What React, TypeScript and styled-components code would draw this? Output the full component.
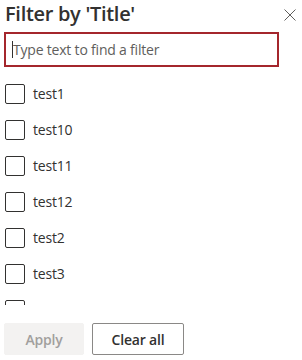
import React from "react";
import styled, { createGlobalStyle } from "styled-components";

const Global = createGlobalStyle`
  html, body { margin: 0; padding: 0; background: #ffffff; overflow: hidden; }
  body { font-family: "Segoe UI", "Open Sans", "Liberation Sans", sans-serif; }
  * { box-sizing: border-box; }
`;

const Panel = styled.div`
  width: 302px;
  height: 360px;
  display: flex;
  flex-direction: column;
  padding: 0 6px 0 4px;
  background: #fff;
`;

const Header = styled.div`
  display: flex;
  align-items: flex-start;
  justify-content: space-between;
  height: 28px;
`;

const Title = styled.h1`
  margin: 0 0 0 1px;
  font-size: 20px;
  line-height: 28px;
  font-weight: 600;
  color: #323130;
  letter-spacing: -0.3px;
`;

const CloseButton = styled.button`
  border: none;
  background: transparent;
  padding: 0;
  margin-top: 9px;
  width: 12px;
  height: 12px;
  display: flex;
  cursor: pointer;
`;

const SearchBox = styled.div`
  margin-top: 4px;
  width: 275px;
  height: 35px;
  border: 2px solid #a4262c;
  display: flex;
  align-items: center;
  padding-left: 6px;
`;

const SearchInput = styled.input`
  border: none;
  outline: none;
  width: 100%;
  font-family: inherit;
  font-size: 14px;
  color: #323130;
  padding: 0;
  letter-spacing: -0.2px;
  &::placeholder { color: #605e5c; }
`;

const Caret = styled.span`
  width: 1px;
  height: 17px;
  background: #323130;
  margin-right: 0px;
  flex: none;
`;

const List = styled.div`
  margin-top: 9px;
  height: 229px;
  overflow: hidden;
  display: flex;
  flex-direction: column;
`;

const Row = styled.label`
  height: 36px;
  flex: none;
  display: flex;
  align-items: center;
  gap: 8px;
  padding-left: 1px;
`;

const Box = styled.span`
  width: 20px;
  height: 20px;
  border: 1px solid #323130;
  border-radius: 2px;
  flex: none;
`;

const Label = styled.span`
  font-size: 14px;
  color: #323130;
  line-height: 20px;
  letter-spacing: -0.2px;
`;

const Footer = styled.div`
  margin-top: 18px;
  display: flex;
  gap: 8px;
`;

const Button = styled.button<{ $primary?: boolean; $w: number }>`
  width: ${(p) => p.$w}px;
  height: 32px;
  border-radius: 2px;
  font-family: inherit;
  font-size: 14px;
  font-weight: 600;
  letter-spacing: -0.2px;
  padding: 0;
  border: ${(p) => (p.$primary ? "1px solid #f3f2f1" : "1px solid #8a8886")};
  background: ${(p) => (p.$primary ? "#f3f2f1" : "#ffffff")};
  color: ${(p) => (p.$primary ? "#a19f9d" : "#323130")};
`;

const items = ["test1", "test10", "test11", "test12", "test2", "test3", "test4"];

export default function App() {
  return (
    <>
      <Global />
      <Panel>
        <Header>
          <Title>Filter by 'Title'</Title>
          <CloseButton aria-label="Close">
            <svg width="12" height="12" viewBox="0 0 12 12">
              <path d="M0.5 0.5 L11.5 11.5 M11.5 0.5 L0.5 11.5" stroke="#605e5c" strokeWidth="1" fill="none" />
            </svg>
          </CloseButton>
        </Header>
        <SearchBox>
          <Caret />
          <SearchInput placeholder="Type text to find a filter" />
        </SearchBox>
        <List>
          {items.map((t) => (
            <Row key={t}>
              <Box />
              <Label>{t}</Label>
            </Row>
          ))}
        </List>
        <Footer>
          <Button $primary $w={80} disabled>Apply</Button>
          <Button $w={92}>Clear all</Button>
        </Footer>
      </Panel>
    </>
  );
}
